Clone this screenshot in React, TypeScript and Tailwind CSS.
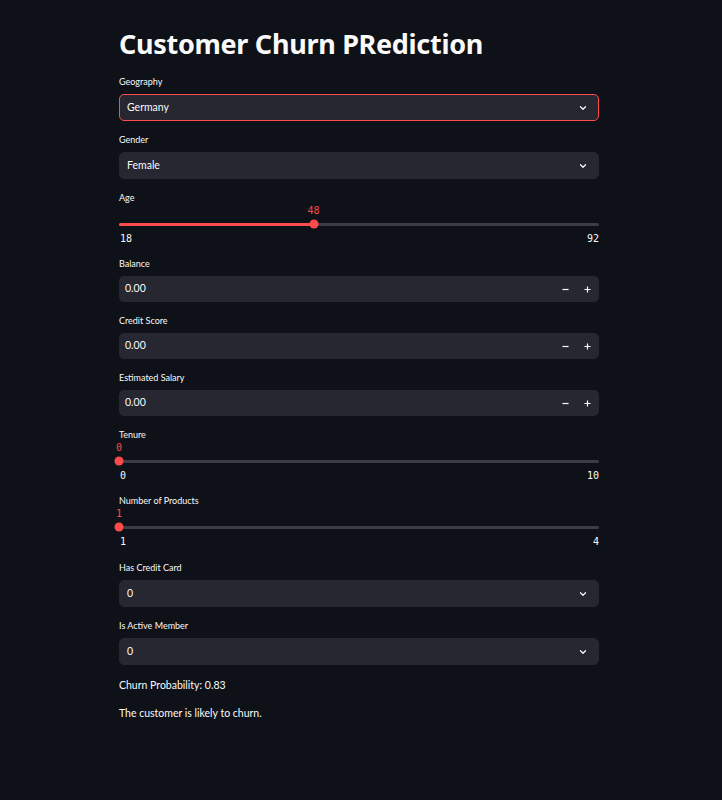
import { ReactNode } from 'react';

const font = { fontFamily: 'Lato, "Noto Sans", sans-serif' };
const titleFont = { fontFamily: '"Noto Sans", "Open Sans", sans-serif' };
const mono = { fontFamily: '"DejaVu Sans Mono", "Liberation Mono", monospace' };

const Label = ({ children }: { children: ReactNode }) => (
    <div className="h-[20px] flex items-center text-[9px] text-[#fafafa]">{children}</div>
);

const Chevron = () => (
    <svg width="10" height="10" viewBox="0 0 24 24" fill="none" stroke="#fafafa" strokeWidth="3" strokeLinecap="round" strokeLinejoin="round">
        <path d="M6 9l6 6 6-6" />
    </svg>
);

const SelectBox = ({ label, value, focused = false }: { label: string; value: string; focused?: boolean }) => (
    <div className="pb-[9px]">
        <Label>{label}</Label>
        <div
            className={`mt-[2px] h-[27px] rounded-[5px] bg-[#262730] flex items-center justify-between pl-[7px] pr-[10px] border ${focused ? 'border-[#ff4b4b]' : 'border-[#262730]'}`}
        >
            <span className="text-[10.5px] text-[#fafafa]">{value}</span>
            <Chevron />
        </div>
    </div>
);

const NumberBox = ({ label, value }: { label: string; value: string }) => (
    <div className="pb-[9px]">
        <Label>{label}</Label>
        <div className="mt-[2px] h-[26px] rounded-[5px] bg-[#262730] flex items-center justify-between pl-[6px] pr-[8px]">
            <span className="text-[10.5px] text-[#fafafa]">{value}</span>
            <div className="flex items-center gap-[15px]">
                <svg width="7" height="7" viewBox="0 0 8 8">
                    <path d="M0.5 4h7" stroke="#fafafa" strokeWidth="1.4" />
                </svg>
                <svg width="7" height="7" viewBox="0 0 8 8">
                    <path d="M0.5 4h7M4 0.5v7" stroke="#fafafa" strokeWidth="1.4" />
                </svg>
            </div>
        </div>
    </div>
);

const Slider = ({ label, min, max, value }: { label: string; min: number; max: number; value: number }) => {
    const pct = ((value - min) / (max - min)) * 100;
    return (
        <div className="pb-[10px]">
            <Label>{label}</Label>
            <div className="relative -mt-[2px] h-[10px]">
                <span
                    className="absolute top-0 -translate-x-1/2 text-[10px] leading-[10px] text-[#ff4b4b]"
                    style={{ ...mono, left: `${pct}%` }}
                >
                    {value}
                </span>
            </div>
            <div className="relative h-[16px] flex items-center">
                <div className="w-full h-[3px] rounded-full bg-[#3b3c45]">
                    <div className="h-full rounded-full bg-[#ff4b4b]" style={{ width: `${pct}%` }} />
                </div>
                <div
                    className="absolute top-1/2 w-[9px] h-[9px] -translate-x-1/2 -translate-y-1/2 rounded-full bg-[#ff4b4b]"
                    style={{ left: `${pct}%` }}
                />
            </div>
            <div className="h-[12px] flex items-center justify-between text-[10px] text-[#fafafa] pl-[1px]" style={mono}>
                <span>{min}</span>
                <span>{max}</span>
            </div>
        </div>
    );
};

export default function App() {
    return (
        <div className="min-h-[800px] bg-[#0e1117]" style={font}>
            <div className="ml-[119px] w-[480px] pt-[26px]">
                <h1
                    className="h-[46px] text-[27px] leading-[36px] font-bold text-[#fafafa] tracking-[-0.3px]"
                    style={titleFont}
                >
                    Customer Churn PRediction
                </h1>
                <SelectBox label="Geography" value="Germany" focused />
                <SelectBox label="Gender" value="Female" />
                <Slider label="Age" min={18} max={92} value={48} />
                <NumberBox label="Balance" value="0.00" />
                <NumberBox label="Credit Score" value="0.00" />
                <NumberBox label="Estimated Salary" value="0.00" />
                <Slider label="Tenure" min={0} max={10} value={0} />
                <Slider label="Number of Products" min={1} max={4} value={1} />
                <div className="pt-[1px]" />
                <SelectBox label="Has Credit Card" value="0" />
                <SelectBox label="Is Active Member" value="0" />
                <p className="mt-[3px] h-[28px] text-[10.5px] leading-[16px] text-[#fafafa]">Churn Probability: 0.83</p>
                <p className="text-[10.5px] leading-[16px] text-[#fafafa]">The customer is likely to churn.</p>
            </div>
        </div>
    );
}
